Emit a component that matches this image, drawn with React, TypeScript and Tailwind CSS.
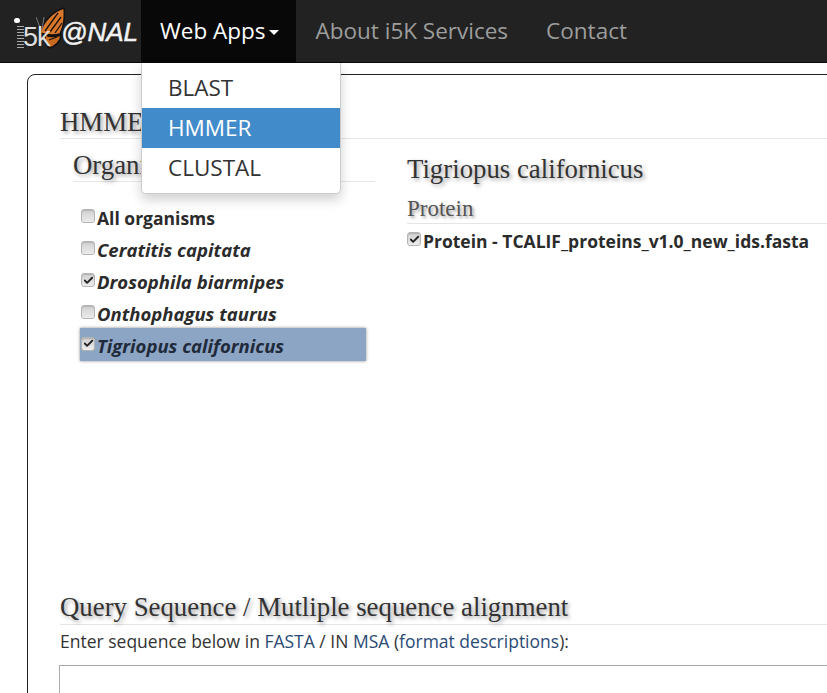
import { Check } from 'lucide-react'

const organisms = [
  { name: 'All organisms', italic: false, checked: false, active: false },
  { name: 'Ceratitis capitata', italic: true, checked: false, active: false },
  { name: 'Drosophila biarmipes', italic: true, checked: true, active: false },
  { name: 'Onthophagus taurus', italic: true, checked: false, active: false },
  { name: 'Tigriopus californicus', italic: true, checked: true, active: true },
]

function Checkbox({ checked }: { checked: boolean }) {
  return (
    <span className="flex h-[14px] w-[14px] shrink-0 items-center justify-center rounded-[3px] border border-[#b5b5b5] bg-gradient-to-b from-[#cfcfcf] to-[#ededed] shadow-[inset_0_1px_1px_rgba(0,0,0,0.15)]">
      {checked && <Check className="h-[11px] w-[11px] text-[#222]" strokeWidth={4} />}
    </span>
  )
}

function Logo() {
  return (
    <div className="relative h-[62px] w-[141px] shrink-0">
      <div className="absolute left-[11px] top-[18px] flex flex-col items-center">
        <span className="ml-[-2px] h-[5px] w-[6px] rounded-full bg-white" />
        <span className="ml-[6px] mt-[2px] h-[23px] w-[7px] bg-[repeating-linear-gradient(0deg,#aaa_0,#aaa_1px,transparent_1px,transparent_3px)]" />
      </div>
      <svg className="absolute left-[36px] top-[6px]" width="30" height="44" viewBox="0 0 30 44">
        <path d="M4 27 C7 16 17 5 28 2 C29 12 27 22 24 28 C17 30 10 29 4 27 Z" fill="#d9772b" stroke="#111" strokeWidth="1.5" />
        <path d="M9 29 C14 31 20 31 25 29 C25 35 19 41 13 42 C10 39 9 34 9 29 Z" fill="#c96a20" stroke="#111" strokeWidth="1.5" />
        <path d="M9 25 L22 7 M14 26 L25 11 M19 27 L26 17 M13 34 L21 31" stroke="#1c120a" strokeWidth="1.3" />
        <path d="M0 11 L5 24 M8 11 L6 24" stroke="#777" strokeWidth="1" fill="none" />
      </svg>
      <span className="absolute left-[23px] top-[24px] font-['Liberation_Sans',sans-serif] text-[27px] leading-[27px] tracking-[-1px] text-[#dedede]">
        5k
      </span>
      <span className="absolute left-[61px] top-[17px] font-['Liberation_Sans',sans-serif] text-[26px] italic leading-[30px] text-[#f2f2f2] [-webkit-text-stroke:0.5px_#f2f2f2]">
        @NAL
      </span>
    </div>
  )
}

export default function App() {
  return (
    <div className="relative h-[693px] w-[827px] overflow-hidden bg-white font-['Open_Sans',sans-serif] text-[#333]">
      <nav className="flex h-[63px] items-stretch border-b border-[#080808] bg-[#222]">
        <Logo />
        <div className="flex items-center gap-[3px] bg-[#080808] pl-[19px] pr-[17px] text-[22.5px] text-white">
          <span>Web Apps</span>
          <span className="mt-[3px] h-0 w-0 border-x-[5px] border-t-[5px] border-x-transparent border-t-white" />
        </div>
        <div className="flex items-center pl-[20px] pr-[19px] text-[22.5px] text-[#9d9d9d]">About i5K Services</div>
        <div className="flex items-center px-[19px] text-[22.5px] text-[#9d9d9d]">Contact</div>
      </nav>

      <main className="pl-[27px] pt-[11px]">
        <div className="h-[660px] w-[900px] rounded-tl-[8px] border border-[#222] pl-[32px] pt-[30px]">
          <h2 className="h-[34px] w-[860px] border-b border-[#e5e5e5] font-['Liberation_Serif',serif] text-[26.8px] leading-[34px] [text-shadow:2px_2px_4px_rgba(0,0,0,0.4)]">
            HMMER
          </h2>

          <div className="flex h-[452px]">
            <div className="w-[347px] shrink-0 pl-[13px]">
              <h3 className="mt-[10px] h-[33px] w-[302px] border-b border-[#e5e5e5] font-['Liberation_Serif',serif] text-[26.8px] leading-[32px] [text-shadow:2px_2px_4px_rgba(0,0,0,0.4)]">
                Organisms
              </h3>
              <ul className="mt-[20px] flex flex-col">
                {organisms.map((o) => (
                  <li
                    key={o.name}
                    className={`ml-[7px] flex w-[286px] items-center gap-[2px] pl-[1px] font-bold ${
                      o.italic ? 'text-[18.5px] italic' : 'text-[17.5px]'
                    } ${o.active ? '-mt-[2px] h-[33px] bg-[#8da5c4] pt-[2px] shadow-[0_0_3px_rgba(0,0,0,0.45)]' : 'h-[32px]'}`}
                  >
                    <span className="-mt-[4px]">
                      <Checkbox checked={o.checked} />
                    </span>
                    <span className={o.active ? 'text-[#1f2a3a]' : 'text-[#2b2b2b]'}>{o.name}</span>
                  </li>
                ))}
              </ul>
            </div>

            <div className="flex-1">
              <h3 className="mt-[13px] font-['Liberation_Serif',serif] text-[26.8px] leading-[34px] text-[#333] [text-shadow:2px_2px_4px_rgba(0,0,0,0.4)]">
                Tigriopus californicus
              </h3>
              <h4 className="mt-[9px] h-[29px] border-b border-[#e5e5e5] font-['Liberation_Serif',serif] text-[23px] leading-[27px] text-[#555] [text-shadow:2px_2px_3px_rgba(0,0,0,0.35)]">
                Protein
              </h4>
              <div className="mt-[1px] flex h-[32px] items-center gap-[2px] text-[17.5px] font-bold text-[#2b2b2b]">
                <span className="-mt-[4px]">
                  <Checkbox checked />
                </span>
                <span>Protein - TCALIF_proteins_v1.0_new_ids.fasta</span>
              </div>
            </div>
          </div>

          <h2 className="h-[34px] border-b border-[#e5e5e5] font-['Liberation_Serif',serif] text-[26.8px] leading-[33px] [text-shadow:2px_2px_4px_rgba(0,0,0,0.4)]">
            Query Sequence / Mutliple sequence alignment
          </h2>
          <p className="mt-[3px] h-[26px] text-[17.5px] leading-[26px]">
            Enter sequence below in <a className="text-[#2a4a75]">FASTA</a> / IN <a className="text-[#2a4a75]">MSA</a>{' '}
            (<a className="text-[#2a4a75]">format descriptions</a>):
          </p>
          <div className="-ml-[1px] mt-[11px] h-[60px] border border-[#aaa]" />
        </div>
      </main>

      <div className="absolute left-[141px] top-[63px] w-[200px] rounded-b-[5px] border border-t-0 border-[#ccc] bg-white py-[5px] text-[22.5px] shadow-[0_6px_12px_rgba(0,0,0,0.18)]">
        <div className="flex h-[40px] items-center pl-[26px] text-[#333]">BLAST</div>
        <div className="flex h-[40px] items-center bg-[#428bca] pl-[26px] text-white">HMMER</div>
        <div className="flex h-[40px] items-center pl-[26px] text-[#333]">CLUSTAL</div>
      </div>
    </div>
  )
}
